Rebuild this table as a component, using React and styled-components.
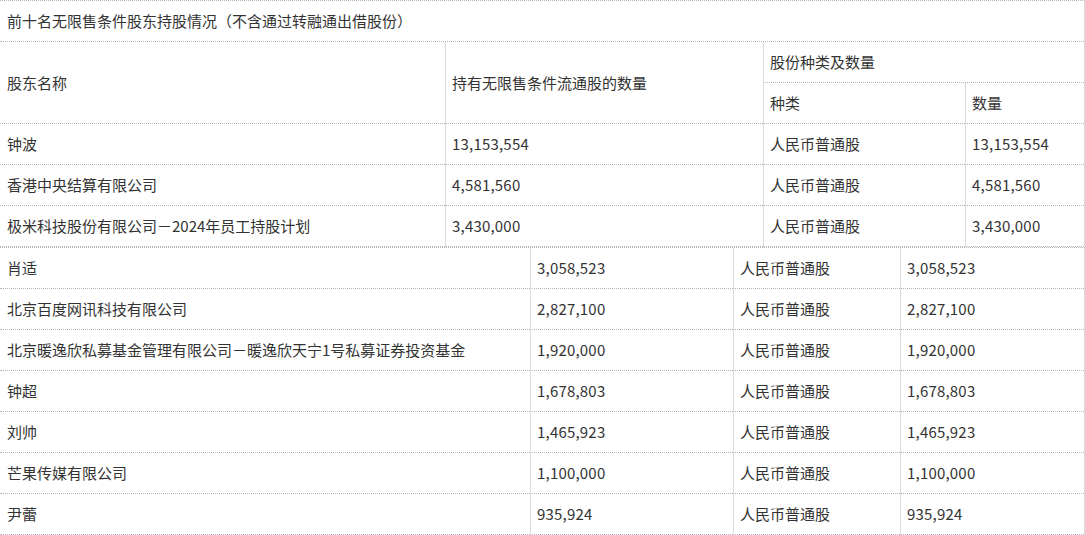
import React from "react";
import styled, { createGlobalStyle } from "styled-components";

const GlobalStyle = createGlobalStyle`
  html, body {
    margin: 0;
    padding: 0;
    background: #fff;
  }
  body {
    font-family: "Noto Sans CJK SC", "Noto Sans", sans-serif;
    color: #333;
  }
`;

const Table = styled.table`
  width: 1085px;
  table-layout: fixed;
  border-collapse: separate;
  border-spacing: 0;
  border-top: 1px dotted #b5b5b5;
  border-right: 1px solid #dcdcdc;
  font-size: 15px;
`;

const Col = styled.col`
  width: ${(p) => (p.$w ? `${p.$w}px` : "auto")};
`;

const Cell = styled.td`
  box-sizing: border-box;
  height: ${(p) => (p.$h ? p.$h : 41)}px;
  padding: 0 6px 0 ${(p) => (p.$lead ? 7 : 6)}px;
  border-bottom: 1px dotted #b5b5b5;
  border-left: ${(p) => (p.$first ? "none" : "1px solid #dcdcdc")};
  vertical-align: middle;
  text-align: left;
  font-weight: normal;
  white-space: nowrap;
  line-height: 20px;
`;

const Num = styled.span`
  letter-spacing: 0.2px;
`;

const topRows = [
  ["钟波", "13,153,554"],
  ["香港中央结算有限公司", "4,581,560"],
  ["极米科技股份有限公司－2024年员工持股计划", "3,430,000"],
];

const bottomRows = [
  ["肖适", "3,058,523"],
  ["北京百度网讯科技有限公司", "2,827,100"],
  ["北京暖逸欣私募基金管理有限公司－暖逸欣天宁1号私募证券投资基金", "1,920,000"],
  ["钟超", "1,678,803"],
  ["刘帅", "1,465,923"],
  ["芒果传媒有限公司", "1,100,000"],
  ["尹蕾", "935,924"],
];

const HolderRow = ({ name, amount }) => (
  <tr>
    <Cell $first $lead>{name}</Cell>
    <Cell><Num>{amount}</Num></Cell>
    <Cell>人民币普通股</Cell>
    <Cell><Num>{amount}</Num></Cell>
  </tr>
);

const App = () => (
  <>
    <GlobalStyle />
    <Table>
      <colgroup>
        <Col $w={445} />
        <Col $w={318} />
        <Col $w={202} />
        <Col />
      </colgroup>
      <tbody>
        <tr>
          <Cell $first $lead colSpan={4}>
            前十名无限售条件股东持股情况（不含通过转融通出借股份）
          </Cell>
        </tr>
        <tr>
          <Cell as="th" $first $lead rowSpan={2}>股东名称</Cell>
          <Cell as="th" rowSpan={2}>持有无限售条件流通股的数量</Cell>
          <Cell as="th" colSpan={2}>股份种类及数量</Cell>
        </tr>
        <tr>
          <Cell as="th">种类</Cell>
          <Cell as="th">数量</Cell>
        </tr>
        {topRows.map(([name, amount]) => (
          <HolderRow key={name} name={name} amount={amount} />
        ))}
      </tbody>
    </Table>
    <Table>
      <colgroup>
        <Col $w={530} />
        <Col $w={203} />
        <Col $w={167} />
        <Col />
      </colgroup>
      <tbody>
        {bottomRows.map(([name, amount]) => (
          <HolderRow key={name} name={name} amount={amount} />
        ))}
      </tbody>
    </Table>
  </>
);

export default App;
